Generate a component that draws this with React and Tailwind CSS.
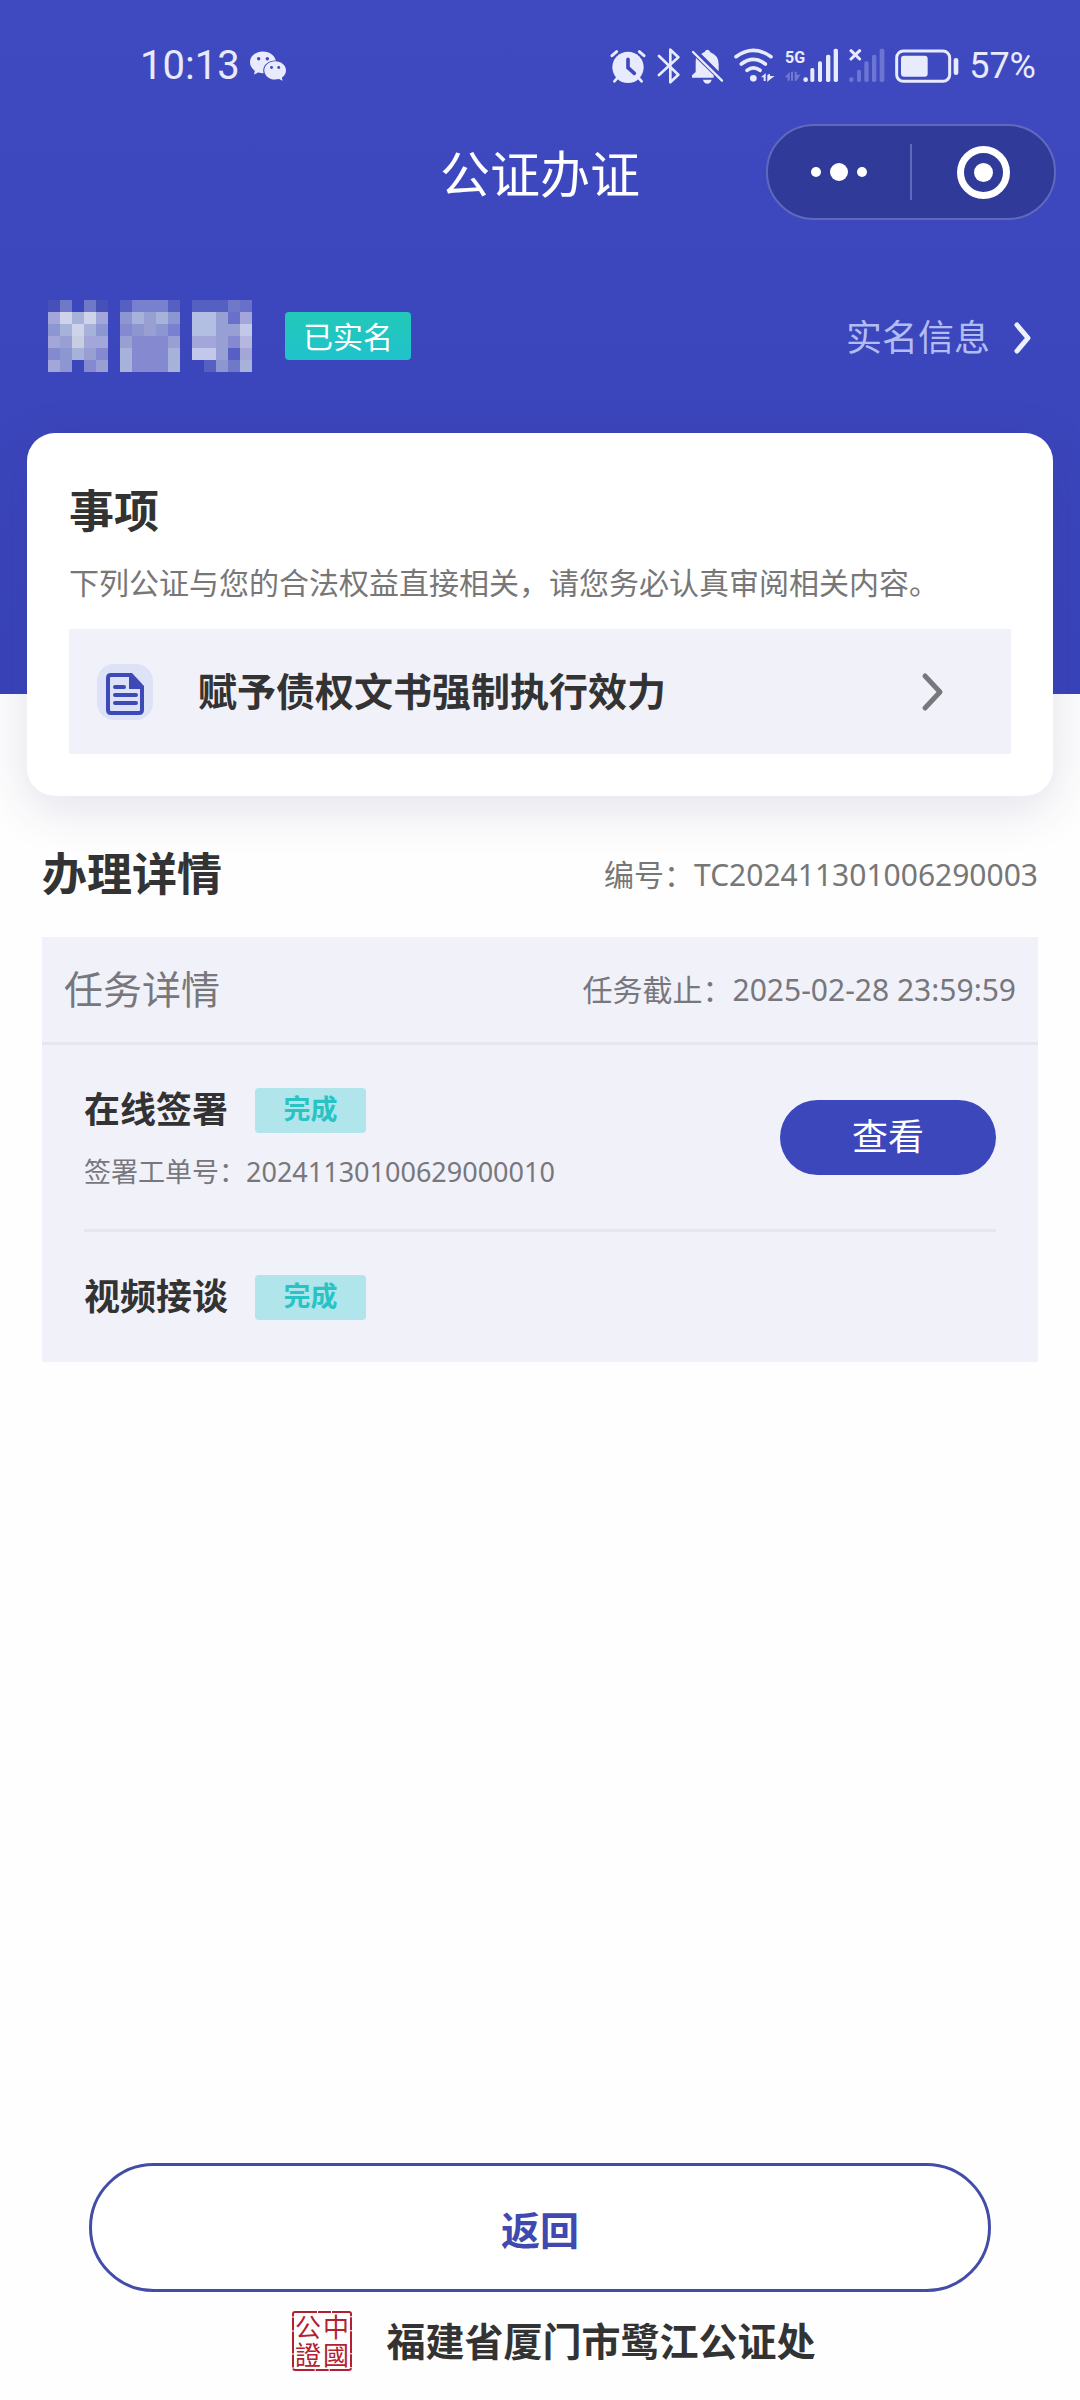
import { IoLogoWechat } from "react-icons/io5";

// Masked name: one letter per cell, "." is empty
const nameColors = {
  a: "#4550b9", b: "#6f79c8", c: "#a3a6d8", d: "#cfd3ea", e: "#8c97d2",
  f: "#a7b2da", g: "#989fd2", h: "#c8cde2", i: "#8489d0", j: "#5660c2",
  k: "#7781d0", l: "#b3bee3", m: "#b5b7df", n: "#6870cc", o: "#c1c8ea",
};

const nameGlyphs = [
  ["ab.ba", "cdfdc", "efdfe", "cghcc", "iefgi", "ce.ig"],
  ["jkkkj", "efgfe", "iegek", "giiig", "fiiif", "fiiif"],
  ["jjjbn", "llgnc", "llggo", "ccgim", "oogjc", ".jebf"],
];

const tasks = [
  { title: "在线签署", status: "完成", order: "20241130100629000010" },
  { title: "视频接谈", status: "完成" },
];

function MaskedName() {
  return (
    <svg className="h-[72px] w-[204px]" viewBox="0 0 204 72" shapeRendering="crispEdges">
      {nameGlyphs.map((glyph, g) =>
        glyph.map((row, y) =>
          row.split("").map((cell, x) =>
            cell === "." ? null : (
              <rect key={`${g}-${y}-${x}`} x={g * 72 + x * 12} y={y * 12} width="12" height="12" fill={nameColors[cell]} />
            )
          )
        )
      )}
    </svg>
  );
}

function StatusIcons() {
  return (
    <>
      {/* alarm */}
      <svg className="h-9 w-[37px]" viewBox="58 52 111 108" fill="none" stroke="#e8eafd" strokeLinecap="round">
        <circle cx="112" cy="110" r="47" fill="#e8eafd" stroke="none" />
        <path d="M64 75L78 63M160 75L146 63" strokeWidth="9" />
        <path d="M80 142L71 152M144 142L153 152" strokeWidth="8" />
        <path d="M112 86V111L131 128" stroke="#3e49bf" strokeWidth="11" />
      </svg>
      {/* bluetooth */}
      <svg className="h-9 w-6" viewBox="198 52 72 108" fill="none" stroke="#e8eafd" strokeWidth="8" strokeLinejoin="round" strokeLinecap="round">
        <path d="M204 76L262 132L238 155V57L262 80L204 133" />
      </svg>
      {/* muted bell */}
      <svg className="h-9 w-[33px]" viewBox="304 52 99 108" fill="#e8eafd">
        <path d="M335 70Q340 66 344 65Q347 57 353 57Q360 57 362 65Q387 74 387 101V122Z" />
        <path d="M319 82L372 134V141H307V134L318 124V98Q318 89 319 82Z" />
        <path d="M340 147H366Q363 159 353 159Q343 159 340 147Z" />
        <path d="M310 64L397 150" stroke="#e8eafd" strokeWidth="7" strokeLinecap="round" />
      </svg>
      {/* wifi */}
      <svg className="h-9 w-[41px]" viewBox="429 52 123 108" fill="none" stroke="#e8eafd" strokeWidth="11" strokeLinecap="round">
        <path d="M435 78Q487 40 540 78M451 100Q487 72 523 100M468 119Q487 104 507 119" />
        <circle cx="487" cy="143" r="10" fill="#e8eafd" stroke="none" />
        <path d="M510 140L524 127V151H518V140ZM529 133V154L535 148L551 136H537V129Z" fill="#e8eafd" stroke="none" />
      </svg>
      {/* 5G signal */}
      <svg className="h-9 w-[54px]" viewBox="576 52 162 108" fill="#e8eafd">
        <text x="576" y="96" fontSize="48" fontWeight="700" className="font-['Roboto',sans-serif]">5G</text>
        <path d="M576 140L590 123V150H584V140ZM594 123H600V150H594ZM605 150V123H611V132H622L611 150Z" opacity=".3" />
        <circle cx="638" cy="147" r="7" />
        <rect x="652" y="112" width="12" height="42" rx="5" />
        <rect x="675" y="92" width="12" height="62" rx="5" />
        <rect x="699" y="72" width="13" height="82" rx="5" />
        <rect x="722" y="54" width="13" height="100" rx="5" />
      </svg>
      {/* no signal */}
      <svg className="h-9 w-9" viewBox="770 52 108 108" fill="#6c76d2">
        <path d="M776 60L802 85M802 60L776 85" stroke="#e8eafd" strokeWidth="9" strokeLinecap="round" />
        <circle cx="777" cy="147" r="7" />
        <rect x="794" y="117" width="12" height="37" rx="5" />
        <rect x="816" y="92" width="13" height="62" rx="5" />
        <rect x="839" y="72" width="13" height="82" rx="5" />
        <rect x="862" y="54" width="14" height="100" rx="5" />
      </svg>
      {/* battery */}
      <svg className="h-9 w-16" viewBox="914 52 192 108" fill="none">
        <rect x="919" y="61" width="159" height="91" rx="20" stroke="#e8eafd" strokeWidth="9" />
        <rect x="932" y="75" width="80" height="63" rx="9" fill="#e8eafd" />
        <rect x="1090" y="82" width="14" height="51" rx="7" fill="#e8eafd" />
      </svg>
    </>
  );
}

function DocIcon() {
  return (
    <svg className="size-14 shrink-0" viewBox="0 0 56 56" fill="none">
      <rect width="56" height="56" rx="17" fill="#dde2f6" />
      <path d="M34 11H14Q11 11 11 14V46Q11 49 14 49H42Q45 49 45 46V23" stroke="#3e49b8" strokeWidth="4" strokeLinejoin="round" />
      <path d="M32 9H35L47 22V25H32Z" fill="#3e49b8" />
      <path d="M18 23H27M18 31H39M18 39H39" stroke="#3e49b8" strokeWidth="4" strokeLinecap="round" />
    </svg>
  );
}

function Seal() {
  return (
    <svg className="size-[60px] overflow-visible" viewBox="0 0 60 60" fill="none" stroke="#b3202f">
      <rect x="1" y="1" width="58" height="58" rx="2" strokeWidth="2" strokeDasharray="22 1 13 1" />
      <g fill="#b3202f" stroke="none" fontSize="26" textAnchor="middle">
        <text x="16" y="26">公</text>
        <text x="44" y="26">中</text>
        <text x="16" y="54">證</text>
        <text x="44" y="54">國</text>
      </g>
    </svg>
  );
}

function Tag({ children }) {
  return (
    <span className="flex h-[45px] w-[111px] items-center justify-center rounded-sm bg-[#b0e5ec] pb-0.5 text-[27px] font-bold text-[#2ac3c4]">
      {children}
    </span>
  );
}

export default function App() {
  return (
    <div lang="zh-CN" className="flex min-h-screen flex-col bg-[#fefefe] font-['Noto_Sans','Noto_Sans_CJK_SC',sans-serif] text-[#333]">
      <header className="bg-linear-to-b from-[#3f4ac0] to-[#3943b9] pb-[322px] text-white">
        {/* Status bar */}
        <div className="flex h-[100px] items-center justify-between pt-8 pr-11 pl-[140px] font-['Roboto',sans-serif] text-[#e8eafd]">
          <div className="flex items-center gap-2.5">
            <span className="text-[40px] leading-none">10:13</span>
            <IoLogoWechat className="size-9" />
          </div>
          <div className="flex items-center gap-2.5">
            <StatusIcons />
            <span className="text-[36px] leading-none">57%</span>
          </div>
        </div>

        {/* Title bar */}
        <div className="mt-6 grid grid-cols-[1fr_auto_1fr] items-center px-6">
          <h1 className="col-start-2 pt-1 text-[50px] leading-[60px]">公证办证</h1>
          <div className="flex h-24 w-[290px] items-center justify-self-end rounded-full border-2 border-[#5f69bd] bg-[#303a98]">
            <button aria-label="更多" className="flex h-full flex-1 items-center justify-center gap-[9px]">
              <span className="size-2.5 rounded-full bg-white" />
              <span className="size-[18px] rounded-full bg-white" />
              <span className="size-2.5 rounded-full bg-white" />
            </button>
            <span className="h-14 w-0.5 bg-[#5f69bd]" />
            <button aria-label="关闭" className="flex h-full flex-1 items-center justify-center">
              <span className="flex size-[53px] items-center justify-center rounded-full border-7 border-white">
                <span className="size-[19px] rounded-full bg-white" />
              </span>
            </button>
          </div>
        </div>

        {/* User */}
        <div className="mt-20 flex items-center justify-between px-12">
          <div className="flex items-center gap-[33px]">
            <MaskedName />
            <span className="flex h-12 w-[126px] items-center justify-center rounded-sm bg-linear-to-b from-[#22c9b8] to-[#20c2cc] text-[30px]">已实名</span>
          </div>
          <a href="#" className="flex items-center gap-6 pt-1 text-[36px] text-[#b1bcf5]">
            实名信息
            <svg className="h-8 w-[18px]" viewBox="0 0 18 32" fill="none" stroke="#eef0fd" strokeWidth="5" strokeLinecap="round" strokeLinejoin="round">
              <path d="M3 3L14 16L3 29" />
            </svg>
          </a>
        </div>
      </header>

      {/* Matters */}
      <section className="-mt-[261px] mx-[27px] rounded-[28px] bg-white px-[42px] pt-12 pb-[42px] shadow-[0_12px_50px_rgba(50,50,110,0.14)]">
        <h2 className="text-[45px] leading-[60px] font-bold">事项</h2>
        <p className="mt-5 text-[30px] leading-[44px] text-[#777]">下列公证与您的合法权益直接相关，请您务必认真审阅相关内容。</p>
        <button className="mt-6 flex h-[125px] w-full items-center bg-[#f1f1fa] pr-[66px] pl-7 text-left">
          <DocIcon />
          <span className="ml-[45px] flex-1 text-[39px] font-bold">赋予债权文书强制执行效力</span>
          <svg className="h-10 w-6" viewBox="0 0 24 40" fill="none" stroke="#77777c" strokeWidth="5" strokeLinecap="round" strokeLinejoin="round">
            <path d="M4 4L19 20L4 36" />
          </svg>
        </button>
      </section>

      {/* Details */}
      <section className="mx-[42px] mt-12">
        <div className="flex items-center justify-between">
          <h2 className="text-[45px] leading-[60px] font-bold">办理详情</h2>
          <span className="text-[30px] text-[#777]">编号：TC202411301006290003</span>
        </div>
        <div className="mt-[33px] bg-[#f1f1fa]">
          <div className="flex h-[108px] items-center justify-between border-b-3 border-[#e6e6ef] px-[22px] text-[#77777c]">
            <h3 className="text-[39px]">任务详情</h3>
            <span className="text-[30px]">任务截止：2025-02-28 23:59:59</span>
          </div>
          <ul className="px-[42px]">
            {tasks.map((task) => (
              <li key={task.title} className="flex items-center justify-between border-b-3 border-[#e6e6ef] py-[37px] last:border-b-0">
                <div>
                  <div className="flex items-center gap-[27px]">
                    <h4 className="text-[36px] leading-[56px] font-bold">{task.title}</h4>
                    <Tag>{task.status}</Tag>
                  </div>
                  {task.order && (
                    <p className="mt-3.5 text-[27px] leading-[40px] text-[#77777c]">签署工单号：{task.order}</p>
                  )}
                </div>
                {task.order && (
                  <button className="h-[75px] w-[216px] rounded-full bg-[#3c47bb] text-[36px] text-white">查看</button>
                )}
              </li>
            ))}
          </ul>
        </div>
      </section>

      <footer className="mt-auto pb-[29px]">
        <div className="px-[89px]">
          <button className="h-[129px] w-full rounded-full border-3 border-[#434da8] bg-white pt-1.5 text-[39px] font-bold text-[#3f49b0]">返回</button>
        </div>
        <div className="mt-[19px] flex items-center justify-center gap-[34px] pl-7">
          <Seal />
          <span className="text-[39px] leading-[60px] font-bold">福建省厦门市鹭江公证处</span>
        </div>
      </footer>
    </div>
  );
}
